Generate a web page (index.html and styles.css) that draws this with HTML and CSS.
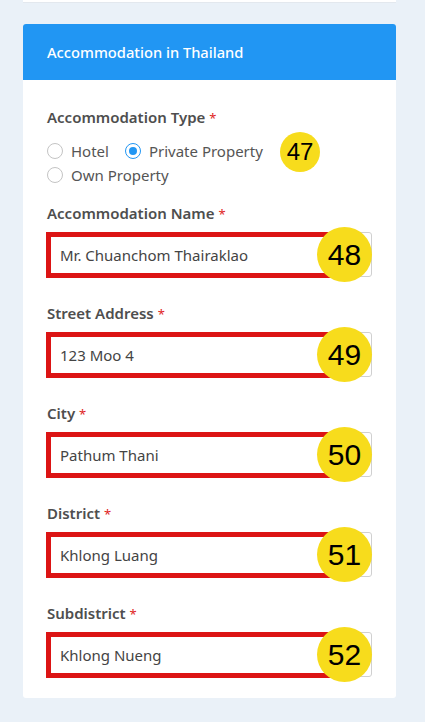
FILE: index.html
```html
<!DOCTYPE html>
<html>
<head>
<meta charset="utf-8">
<link rel="stylesheet" href="styles.css">
</head>
<body>
<div class="page">
  <div class="prev-card"></div>
  <div class="card">
    <div class="card-header">Accommodation in Thailand</div>
    <div class="card-body">
      <div class="field-type">
        <div class="label">Accommodation Type <span class="req">*</span></div>
        <div class="radios">
          <div class="radio-row">
            <span class="radio"><span class="circle"></span>Hotel</span>
            <span class="radio"><span class="circle checked"></span>Private Property</span>
          </div>
          <div class="radio-row">
            <span class="radio"><span class="circle"></span>Own Property</span>
          </div>
        </div>
        <span class="badge-small">47</span>
      </div>

      <div class="field">
        <div class="label">Accommodation Name <span class="req">*</span></div>
        <div class="input-wrap">
          <div class="input">Mr. Chuanchom Thairaklao</div>
          <span class="mark"></span>
          <span class="badge">48</span>
        </div>
      </div>

      <div class="field">
        <div class="label">Street Address <span class="req">*</span></div>
        <div class="input-wrap">
          <div class="input">123 Moo 4</div>
          <span class="mark"></span>
          <span class="badge">49</span>
        </div>
      </div>

      <div class="field">
        <div class="label">City <span class="req">*</span></div>
        <div class="input-wrap">
          <div class="input">Pathum Thani</div>
          <span class="mark"></span>
          <span class="badge">50</span>
        </div>
      </div>

      <div class="field">
        <div class="label">District <span class="req">*</span></div>
        <div class="input-wrap">
          <div class="input">Khlong Luang</div>
          <span class="mark"></span>
          <span class="badge">51</span>
        </div>
      </div>

      <div class="field last">
        <div class="label">Subdistrict <span class="req">*</span></div>
        <div class="input-wrap">
          <div class="input">Khlong Nueng</div>
          <span class="mark"></span>
          <span class="badge">52</span>
        </div>
      </div>
    </div>
  </div>
</div>
</body>
</html>
```
FILE: styles.css
```css
html, body {
  margin: 0;
  padding: 0;
  background: #eaf1f8;
  font-family: "Noto Sans", "Open Sans", sans-serif;
}
.page {
  padding-left: 23px;
  width: 373px;
}
.prev-card {
  height: 2px;
  background: #ffffff;
  border-bottom: 1px solid #e3e8ee;
  margin-bottom: 21px;
}
.card {
  background: #ffffff;
  border-radius: 3px;
  overflow: hidden;
}
.card-header {
  height: 56px;
  background: #2196f3;
  color: #ffffff;
  font-size: 14.7px;
  font-weight: 500;
  padding-left: 24px;
  display: flex;
  align-items: center;
}
.card-body {
  padding: 27px 24px 21px 24px;
}
.label {
  height: 20px;
  line-height: 20px;
  font-size: 15px;
  font-weight: 600;
  color: #4e4e4e;
}
.req {
  color: #e02424;
  font-weight: 400;
  font-size: 13px;
}
.field-type {
  position: relative;
  margin-bottom: 16px;
}
.field-type .label {
  margin-bottom: 12px;
}
.radio-row {
  display: flex;
  align-items: center;
  height: 24px;
  gap: 16px;
}
.radio {
  display: flex;
  align-items: center;
  gap: 8px;
  font-size: 15px;
  color: #555555;
}
.circle {
  width: 14px;
  height: 14px;
  border: 1px solid #c4c4c4;
  border-radius: 50%;
  background: #fff;
  box-sizing: content-box;
  position: relative;
}
.circle.checked {
  border-color: #2196f3;
}
.circle.checked::after {
  content: "";
  position: absolute;
  left: 3px;
  top: 3px;
  width: 8px;
  height: 8px;
  border-radius: 50%;
  background: #2196f3;
}
.badge,
.badge-small {
  position: absolute;
  display: flex;
  align-items: center;
  justify-content: center;
  border-radius: 50%;
  background: #f7dc1c;
  color: #000;
  font-family: "Liberation Sans", Arial, sans-serif;
}
.badge-small {
  width: 40px;
  height: 40px;
  font-size: 24px;
  left: 233px;
  top: 25px;
}
.badge {
  width: 55px;
  height: 55px;
  font-size: 30px;
  right: 0;
  top: -5px;
}
.field {
  margin-bottom: 26px;
}
.field.last {
  margin-bottom: 0;
}
.field .label {
  margin-bottom: 9px;
}
.input-wrap {
  position: relative;
}
.input {
  height: 45px;
  box-sizing: border-box;
  border: 1px solid #d0d0d0;
  border-radius: 3px;
  padding-left: 12px;
  display: flex;
  align-items: center;
  font-size: 15px;
  color: #444444;
}
.mark {
  position: absolute;
  left: -1px;
  top: 0;
  width: 290px;
  height: 46px;
  box-sizing: border-box;
  border: 5px solid #dc1414;
}
```
